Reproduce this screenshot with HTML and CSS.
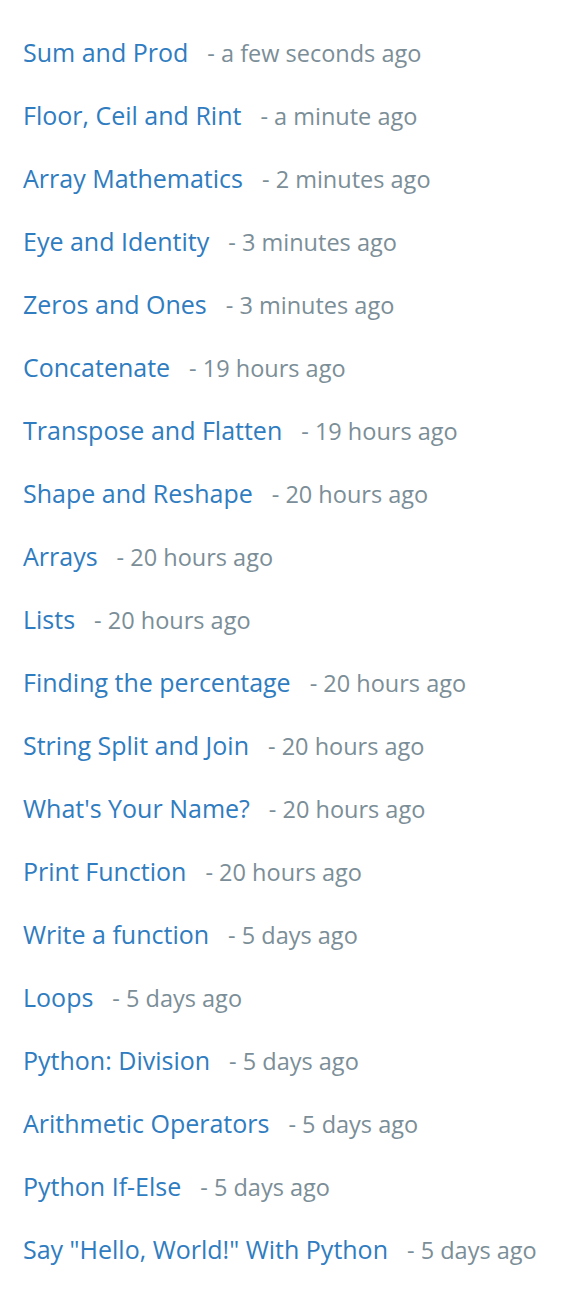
FILE: index.html
```html
<!DOCTYPE html>
<html>
<head>
<meta charset="utf-8">
<link rel="stylesheet" href="styles.css">
</head>
<body>
<ul class="list">
  <li class="item"><a class="title">Sum and Prod</a><span class="time">- a few seconds ago</span></li>
  <li class="item"><a class="title">Floor, Ceil and Rint</a><span class="time">- a minute ago</span></li>
  <li class="item"><a class="title">Array Mathematics</a><span class="time">- 2 minutes ago</span></li>
  <li class="item"><a class="title">Eye and Identity</a><span class="time">- 3 minutes ago</span></li>
  <li class="item"><a class="title">Zeros and Ones</a><span class="time">- 3 minutes ago</span></li>
  <li class="item"><a class="title">Concatenate</a><span class="time">- 19 hours ago</span></li>
  <li class="item"><a class="title">Transpose and Flatten</a><span class="time">- 19 hours ago</span></li>
  <li class="item"><a class="title">Shape and Reshape</a><span class="time">- 20 hours ago</span></li>
  <li class="item"><a class="title">Arrays</a><span class="time">- 20 hours ago</span></li>
  <li class="item"><a class="title">Lists</a><span class="time">- 20 hours ago</span></li>
  <li class="item"><a class="title">Finding the percentage</a><span class="time">- 20 hours ago</span></li>
  <li class="item"><a class="title">String Split and Join</a><span class="time">- 20 hours ago</span></li>
  <li class="item"><a class="title">What's Your Name?</a><span class="time">- 20 hours ago</span></li>
  <li class="item"><a class="title">Print Function</a><span class="time">- 20 hours ago</span></li>
  <li class="item"><a class="title">Write a function</a><span class="time">- 5 days ago</span></li>
  <li class="item"><a class="title">Loops</a><span class="time">- 5 days ago</span></li>
  <li class="item"><a class="title">Python: Division</a><span class="time">- 5 days ago</span></li>
  <li class="item"><a class="title">Arithmetic Operators</a><span class="time">- 5 days ago</span></li>
  <li class="item"><a class="title">Python If-Else</a><span class="time">- 5 days ago</span></li>
  <li class="item"><a class="title">Say "Hello, World!" With Python</a><span class="time">- 5 days ago</span></li>
</ul>
</body>
</html>
```

FILE: styles.css
```css
html, body {
  margin: 0;
  padding: 0;
  background: #ffffff;
}
body {
  font-family: "Open Sans", Lato, sans-serif;
}
.list {
  list-style: none;
  margin: 0;
  padding: 21px 0 0 23px;
  display: flex;
  flex-direction: column;
}
.item {
  height: 63px;
  line-height: 63px;
  font-size: 25px;
  white-space: nowrap;
}
.title {
  color: #2f7cc0;
  text-decoration: none;
}
.time {
  color: #7b8e97;
  font-size: 23.5px;
  margin-left: 19px;
}
```
